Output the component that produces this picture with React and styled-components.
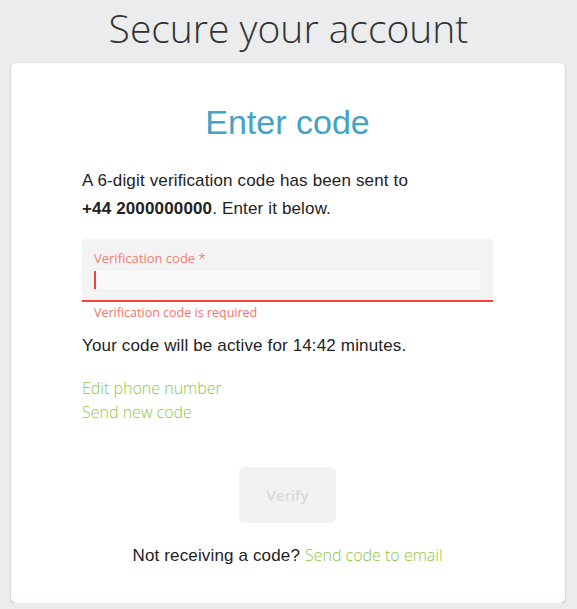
import React from "react";
import styled, { createGlobalStyle } from "styled-components";

const GlobalStyle = createGlobalStyle`
  html, body {
    margin: 0;
    padding: 0;
    background: #ebeced;
  }
  * {
    box-sizing: border-box;
  }
`;

const Page = styled.div`
  width: 577px;
  display: flex;
  flex-direction: column;
  align-items: stretch;
`;

const Title = styled.h1`
  margin: 0 0 7px;
  height: 56px;
  font-family: "Open Sans", sans-serif;
  font-weight: 300;
  font-size: 39px;
  line-height: 56px;
  color: #333;
  text-align: center;
`;

const Card = styled.div`
  margin: 0 12px 0 11px;
  height: 540px;
  background: #fff;
  border-radius: 5px;
  box-shadow: 0 1px 2px rgba(0, 0, 0, 0.3);
  padding: 40px 72px 33px 71px;
  display: flex;
  flex-direction: column;
`;

const Heading = styled.h2`
  margin: 0;
  font-family: "Liberation Sans", Arial, sans-serif;
  font-weight: 400;
  font-size: 34px;
  line-height: 39px;
  color: #44a2c4;
  text-align: center;
`;

const Text = styled.p`
  margin: ${(p) => p.$top || 0}px 0 0;
  font-family: "Liberation Sans", Arial, sans-serif;
  font-size: 17px;
  letter-spacing: 0.15px;
  line-height: 28px;
  color: #222;
  text-align: ${(p) => (p.$center ? "center" : "left")};

  b {
    font-weight: 700;
  }
`;

const Field = styled.div`
  margin-top: 16px;
  background: #f3f3f3;
  border-radius: 4px 4px 0 0;
  border-bottom: 2px solid #f44336;
  padding: 10px 13px 11px 12px;
  display: flex;
  flex-direction: column;
`;

const Label = styled.label`
  font-family: "Open Sans", sans-serif;
  font-size: 13px;
  line-height: 19px;
  color: #f37c72;
`;

const Input = styled.div`
  margin-top: 3px;
  height: 18px;
  background: #f9f9f9;
  position: relative;
`;

const Caret = styled.span`
  position: absolute;
  left: 0;
  top: 0;
  width: 2px;
  height: 18px;
  background: #f44336;
`;

const ErrorText = styled.div`
  margin-top: 3px;
  padding-left: 12px;
  font-family: "Open Sans", sans-serif;
  font-size: 12.5px;
  line-height: 16px;
  color: #f37268;
`;

const Links = styled.div`
  margin-top: 16px;
  display: flex;
  flex-direction: column;
  align-items: flex-start;
`;

const GreenLink = styled.a`
  font-family: "Open Sans", sans-serif;
  font-weight: 300;
  font-size: 16px;
  line-height: 24px;
  color: #8cc63f;
  letter-spacing: 0;
  text-decoration: none;
  cursor: pointer;
`;

const Button = styled.button`
  margin: 43px auto 0;
  width: 97px;
  height: 56px;
  border: none;
  border-radius: 5px;
  background: #f2f2f2;
  color: #d9d9d9;
  font-family: "Open Sans", sans-serif;
  font-weight: 600;
  font-size: 15px;
`;

export default function App() {
  return (
    <>
      <GlobalStyle />
      <Page>
        <Title>Secure your account</Title>
        <Card>
          <Heading>Enter code</Heading>
          <Text $top={25}>
            A 6-digit verification code has been sent to
            <br />
            <b>+44 2000000000</b>. Enter it below.
          </Text>
          <Field>
            <Label>Verification code *</Label>
            <Input>
              <Caret />
            </Input>
          </Field>
          <ErrorText>Verification code is required</ErrorText>
          <Text $top={11}>Your code will be active for 14:42 minutes.</Text>
          <Links>
            <GreenLink>Edit phone number</GreenLink>
            <GreenLink>Send new code</GreenLink>
          </Links>
          <Button disabled>Verify</Button>
          <Text $top={19} $center>
            Not receiving a code? <GreenLink>Send code to email</GreenLink>
          </Text>
        </Card>
      </Page>
    </>
  );
}
